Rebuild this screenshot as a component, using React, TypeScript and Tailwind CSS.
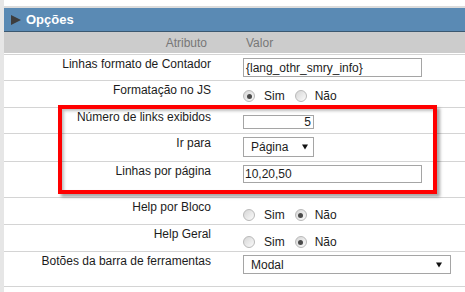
import type { ReactNode } from 'react'

function Radio({ checked }: { checked?: boolean }) {
  return (
    <span className="flex h-[12px] w-[12px] shrink-0 items-center justify-center rounded-full border border-[#b9b9b9] bg-linear-to-br from-[#d6d6d6] to-[#fbfbfb]">
      {checked && <span className="h-[5px] w-[5px] rounded-full bg-[#4a4a4a]" />}
    </span>
  )
}

function YesNo({ yes }: { yes: boolean }) {
  return (
    <div className="flex items-center">
      <Radio checked={yes} />
      <span className="ml-[9px] mr-[10px]">Sim</span>
      <Radio checked={!yes} />
      <span className="ml-[8px]">Não</span>
    </div>
  )
}

function Arrow() {
  return (
    <svg width="6" height="6" viewBox="0 0 6 6" className="shrink-0">
      <polygon points="0,0.5 6,0.5 3,5.5" fill="#111" />
    </svg>
  )
}

function Row({ label, h, pv, children }: { label: string; h: string; pv: string; children: ReactNode }) {
  return (
    <div className={`flex border-b border-[#d4d4d4] ${h}`}>
      <div className="w-[214px] shrink-0 pt-[2px] pr-[7px] text-right leading-[15px]">{label}</div>
      <div className={`flex-1 pl-[25px] ${pv}`}>{children}</div>
    </div>
  )
}

export default function App() {
  return (
    <div className="relative flex h-[292px] w-[465px] overflow-hidden bg-white font-['Liberation_Sans',Arial,sans-serif] text-[12px] text-[#1c1c1c]">
      <div className="w-[4px] shrink-0 bg-[#e6e6e6]" />

      <div className="flex flex-1 flex-col">
        <div className="h-[6px]" />
        <div className="h-[2px] bg-[#dcdcdc]" />

        {/* section header */}
        <div className="flex h-[24px] items-center border-b border-[#3b5870] bg-[#5a8ab4] pl-[7px]">
          <svg width="10" height="10" viewBox="0 0 10 10" className="mr-[5px]">
            <polygon points="0,0 10,5 0,10" fill="#3d3d3d" />
          </svg>
          <span className="text-[13px] font-bold text-white">Opções</span>
        </div>

        <div className="flex h-[21px] items-center bg-[#cccccc] text-[#777777]">
          <div className="w-[214px] pr-[11px] text-right">Atributo</div>
          <div className="pl-[28px]">Valor</div>
        </div>
        <div className="h-[1px]" />
        <div className="h-[1px] bg-[#d4d4d4]" />

        <Row label="Linhas formato de Contador" h="h-[26px]" pv="pt-[3px]">
          <div className="flex h-[19px] w-[179px] items-center border border-[#a5a5a5] pl-[2px]">{'{lang_othr_smry_info}'}</div>
        </Row>
        <Row label="Formatação no JS" h="h-[27px]" pv="pt-[6px]">
          <YesNo yes />
        </Row>
        <Row label="Número de links exibidos" h="h-[26px]" pv="pt-[7px]">
          <div className="flex h-[14px] w-[71px] items-center justify-end border border-[#a5a5a5] pr-[2px]">5</div>
        </Row>
        <Row label="Ir para" h="h-[28px]" pv="pt-[3px]">
          <div className="flex h-[20px] w-[71px] items-center justify-between border border-[#a5a5a5] pr-[5px] pl-[7px]">
            <span>Página</span>
            <Arrow />
          </div>
        </Row>
        <Row label="Linhas por página" h="h-[36px]" pv="pt-[3px]">
          <div className="flex h-[18px] w-[179px] items-center border border-[#a5a5a5] pl-[1px]">10,20,50</div>
        </Row>
        <Row label="Help por Bloco" h="h-[27px]" pv="pt-[8px]">
          <YesNo yes={false} />
        </Row>
        <Row label="Help Geral" h="h-[27px]" pv="pt-[8px]">
          <YesNo yes={false} />
        </Row>
        <Row label="Botões da barra de ferramentas" h="h-[35px]" pv="pt-[3px]">
          <div className="flex h-[19px] w-[208px] items-center justify-between border border-[#a5a5a5] pr-[8px] pl-[7px]">
            <span>Modal</span>
            <Arrow />
          </div>
        </Row>
      </div>

      {/* highlight annotation */}
      <div className="pointer-events-none absolute top-[105px] left-[58px] h-[89px] w-[379px] border-[4px] border-[#ff0000] shadow-[3px_3px_3px_rgba(0,0,0,0.35),inset_2px_2px_3px_rgba(0,0,0,0.25)]" />
    </div>
  )
}
